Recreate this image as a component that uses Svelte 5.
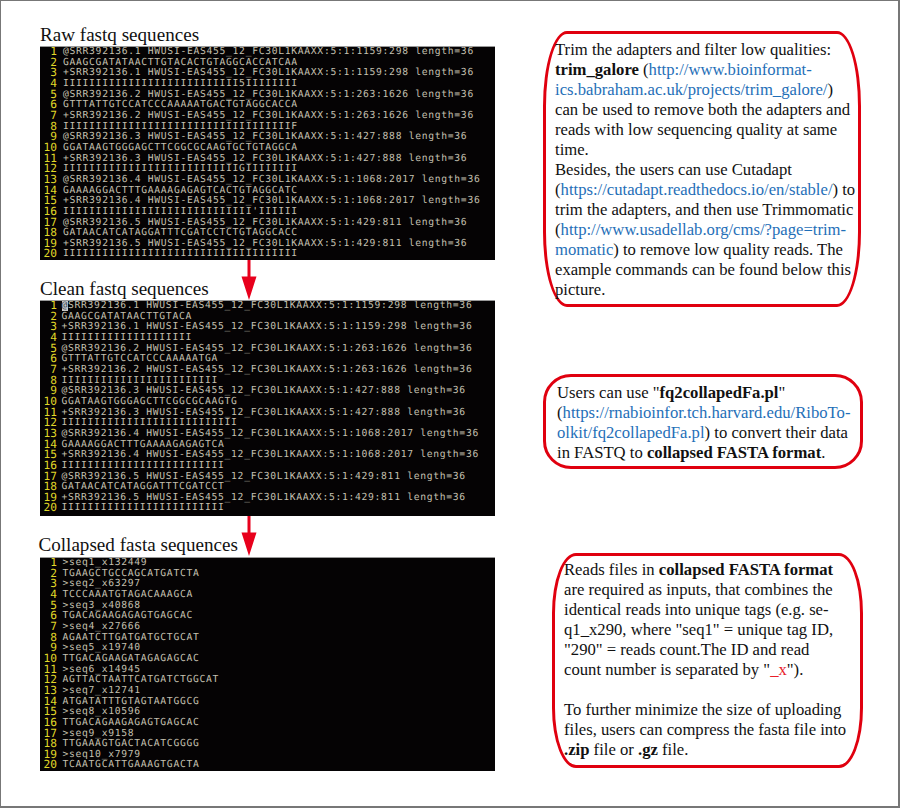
<script lang="ts">
  const raw = [
    '@SRR392136.1 HWUSI-EAS455_12_FC30L1KAAXX:5:1:1159:298 length=36',
    'GAAGCGATATAACTTGTACACTGTAGGCACCATCAA',
    '+SRR392136.1 HWUSI-EAS455_12_FC30L1KAAXX:5:1:1159:298 length=36',
    'IIIIIIIIIIIIIIIIIIIIIIIIIII5IIIIIIII',
    '@SRR392136.2 HWUSI-EAS455_12_FC30L1KAAXX:5:1:263:1626 length=36',
    'GTTTATTGTCCATCCCAAAAATGACTGTAGGCACCA',
    '+SRR392136.2 HWUSI-EAS455_12_FC30L1KAAXX:5:1:263:1626 length=36',
    'IIIIIIIIIIIIIIIIIIIIIIIIIIIIIIIIIIIF',
    '@SRR392136.3 HWUSI-EAS455_12_FC30L1KAAXX:5:1:427:888 length=36',
    'GGATAAGTGGGAGCTTCGGCGCAAGTGCTGTAGGCA',
    '+SRR392136.3 HWUSI-EAS455_12_FC30L1KAAXX:5:1:427:888 length=36',
    'IIIIIIIIIIIIIIIIIIIIIIIIIIIGIIIIIIII',
    '@SRR392136.4 HWUSI-EAS455_12_FC30L1KAAXX:5:1:1068:2017 length=36',
    'GAAAAGGACTTTGAAAAGAGAGTCACTGTAGGCATC',
    '+SRR392136.4 HWUSI-EAS455_12_FC30L1KAAXX:5:1:1068:2017 length=36',
    "IIIIIIIIIIIIIIIIIIIIIIIIIIIII'IIIIII",
    '@SRR392136.5 HWUSI-EAS455_12_FC30L1KAAXX:5:1:429:811 length=36',
    'GATAACATCATAGGATTTCGATCCTCTGTAGGCACC',
    '+SRR392136.5 HWUSI-EAS455_12_FC30L1KAAXX:5:1:429:811 length=36',
    'IIIIIIIIIIIIIIIIIIIIIIIIIIIIIIIIIIII'
  ];

  const clean = [
    'SRR392136.1 HWUSI-EAS455_12_FC30L1KAAXX:5:1:1159:298 length=36',
    'GAAGCGATATAACTTGTACA',
    '+SRR392136.1 HWUSI-EAS455_12_FC30L1KAAXX:5:1:1159:298 length=36',
    'IIIIIIIIIIIIIIIIIIII',
    '@SRR392136.2 HWUSI-EAS455_12_FC30L1KAAXX:5:1:263:1626 length=36',
    'GTTTATTGTCCATCCCAAAAATGA',
    '+SRR392136.2 HWUSI-EAS455_12_FC30L1KAAXX:5:1:263:1626 length=36',
    'IIIIIIIIIIIIIIIIIIIIIIII',
    '@SRR392136.3 HWUSI-EAS455_12_FC30L1KAAXX:5:1:427:888 length=36',
    'GGATAAGTGGGAGCTTCGGCGCAAGTG',
    '+SRR392136.3 HWUSI-EAS455_12_FC30L1KAAXX:5:1:427:888 length=36',
    'IIIIIIIIIIIIIIIIIIIIIIIIIII',
    '@SRR392136.4 HWUSI-EAS455_12_FC30L1KAAXX:5:1:1068:2017 length=36',
    'GAAAAGGACTTTGAAAAGAGAGTCA',
    '+SRR392136.4 HWUSI-EAS455_12_FC30L1KAAXX:5:1:1068:2017 length=36',
    'IIIIIIIIIIIIIIIIIIIIIIIII',
    '@SRR392136.5 HWUSI-EAS455_12_FC30L1KAAXX:5:1:429:811 length=36',
    'GATAACATCATAGGATTTCGATCCT',
    '+SRR392136.5 HWUSI-EAS455_12_FC30L1KAAXX:5:1:429:811 length=36',
    'IIIIIIIIIIIIIIIIIIIIIIIII'
  ];

  const fasta = [
    '>seq1_x132449', 'TGAAGCTGCCAGCATGATCTA',
    '>seq2_x63297', 'TCCCAAATGTAGACAAAGCA',
    '>seq3_x40868', 'TGACAGAAGAGAGTGAGCAC',
    '>seq4_x27666', 'AGAATCTTGATGATGCTGCAT',
    '>seq5_x19740', 'TTGACAGAAGATAGAGAGCAC',
    '>seq6_x14945', 'AGTTACTAATTCATGATCTGGCAT',
    '>seq7_x12741', 'ATGATATTTGTAGTAATGGCG',
    '>seq8_x10596', 'TTGACAGAAGAGAGTGAGCAC',
    '>seq9_x9158', 'TTGAAAGTGACTACATCGGGG',
    '>seq10_x7979', 'TCAATGCATTGAAAGTGACTA'
  ];

  const panels = [
    { id: 'raw', title: 'Raw fastq sequences', lines: raw, cursor: false },
    { id: 'clean', title: 'Clean fastq sequences', lines: clean, cursor: true },
    { id: 'fasta', title: 'Collapsed fasta sequences', lines: fasta, cursor: false }
  ];
</script>

<div class="page">
  <div class="left">
    {#each panels as panel, p}
      <section class="panel {panel.id}">
        <h2>{panel.title}</h2>
        <div class="term">
          {#each panel.lines as line, i}
            <div class="row">
              <span class="num">{i + 1}</span>
              <span class="code">{#if panel.cursor && i === 0}<span class="cursor">@</span>{/if}{line}</span>
            </div>
          {/each}
        </div>
        {#if p < 2}
          <svg class="arrow" width="16" height="40" viewBox="0 0 16 40">
            <path d="M6.5 0h3v16.5H15.5L8 40 .5 16.5h6z" fill="#e8001c" />
          </svg>
        {/if}
      </section>
    {/each}
  </div>

  <div class="right">
    <div class="note note-a">
      Trim the adapters and filter low qualities:<br />
      <b>trim_galore</b> (<span class="link">http://www.bioinformat-<br />ics.babraham.ac.uk/projects/trim_galore/</span>)<br />
      can be used to remove both the adapters and<br />
      reads with low sequencing quality at same<br />
      time.<br />
      Besides, the users can use Cutadapt<br />
      (<span class="link">https://cutadapt.readthedocs.io/en/stable/</span>) to<br />
      trim the adapters, and then use Trimmomatic<br />
      (<span class="link">http://www.usadellab.org/cms/?page=trim-<br />momatic</span>) to remove low quality reads. The<br />
      example commands can be found below this<br />
      picture.
    </div>

    <div class="note note-b">
      Users can use "<b>fq2collapedFa.pl</b>"<br />
      (<span class="link">https://rnabioinfor.tch.harvard.edu/RiboTo-<br />olkit/fq2collapedFa.pl</span>) to convert their data<br />
      in FASTQ to <b>collapsed FASTA format</b>.
    </div>

    <div class="note note-c">
      Reads files in <b>collapsed FASTA format</b><br />
      are required as inputs, that combines the<br />
      identical reads into unique tags (e.g. se-<br />
      q1_x290, where "seq1" = unique tag ID,<br />
      "290" = reads count.The ID and read<br />
      count number is separated by "<span class="red">_x</span>").<br />
      <br />
      To further minimize the size of uploading<br />
      files, users can compress the fasta file into<br />
      <b>.zip</b> file or <b>.gz</b> file.
    </div>
  </div>
</div>

<style>
  :global(body) {
    margin: 0;
    background: #fff;
  }

  .page {
    box-sizing: border-box;
    width: 900px;
    height: 808px;
    border: solid #777;
    border-width: 1px 2px 2px 1px;
    display: flex;
    font-family: "Liberation Serif", serif;
    color: #111;
  }

  .left {
    width: 494px;
    padding: 24px 0 0 39px;
    box-sizing: border-box;
  }

  .panel {
    position: relative;
    margin-bottom: 19px;
  }

  h2 {
    margin: 0 0 1px;
    font-size: 19.1px;
    font-weight: normal;
    line-height: 20px;
  }

  .fasta h2 {
    margin: 0 0 2px -1.5px;
  }

  .term {
    width: 455px;
    height: 214px;
    background: #050304;
    overflow: hidden;
    font-family: "DejaVu Sans Mono", monospace;
    font-size: 9.7px;
    letter-spacing: 0.69px;
    line-height: 10.67px;
    text-rendering: geometricPrecision;
    border-top: 1px solid #999;
    box-sizing: border-box;
  }

  .clean .term {
    height: 216px;
  }

  .row {
    display: flex;
    height: 10.67px;
    white-space: pre;
  }

  .num {
    width: 17px;
    text-align: right;
    color: #e0d828;
    font-size: 11.2px;
    letter-spacing: 0;
  }

  .code {
    margin-left: 6px;
    color: #c4c0b0;
  }

  .clean .code {
    margin-left: 4.5px;
  }

  .fasta .code {
    margin-left: 5.5px;
  }

  .cursor {
    background: #c8c8c8;
    color: #345;
  }

  .arrow {
    position: absolute;
    left: 201px;
    top: 100%;
  }

  .right {
    flex: 1;
  }

  .note {
    box-sizing: border-box;
    border: 3px solid #e0000f;
    background: #fff;
    font-size: 16.67px;
    line-height: 20px;
    white-space: nowrap;
  }

  .note-a {
    width: 318px;
    height: 276px;
    margin: 30px 0 0 48px;
    padding: 6px 0 0 9px;
    border-radius: 24px / 75px;
  }

  .note-b {
    width: 320px;
    height: 95px;
    margin: 67px 0 0 48px;
    padding: 6px 0 0 11px;
    border-radius: 28px;
  }

  .note-c {
    width: 311px;
    height: 215px;
    margin: 84px 0 0 57px;
    padding: 4px 0 0 9px;
    border-radius: 24px / 60px;
  }

  .link {
    color: #1f6fb8;
  }

  .red {
    color: #e8202a;
  }
</style>
